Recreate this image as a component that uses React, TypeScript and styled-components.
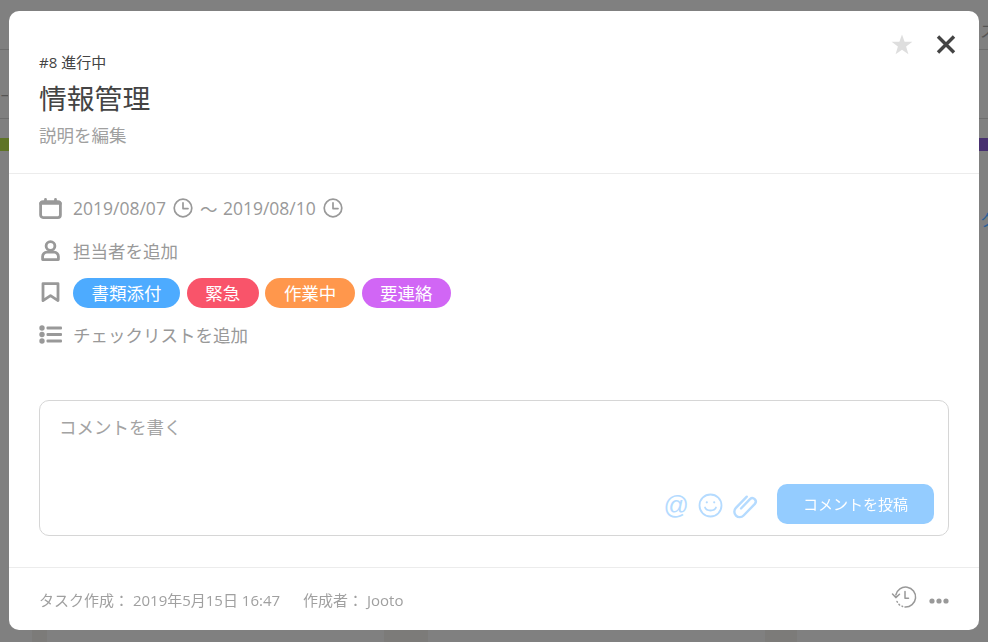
import styled, { createGlobalStyle } from 'styled-components';

const GlobalStyle = createGlobalStyle`
  html, body {
    margin: 0;
    padding: 0;
    height: 100%;
    overflow: hidden;
    background: #808080;
    font-family: "Open Sans", "Noto Sans CJK JP", sans-serif;
  }
  * {
    box-sizing: border-box;
  }
`;

/* the dimmed board behind the dialog */
const Board = styled.div`
  width: 988px;
  height: 642px;
  overflow: hidden;
  display: flex;
  flex-direction: column;
  background: #808080;
`;

const BoardTop = styled.div`
  height: 50px;
  display: flex;
  justify-content: flex-end;
  align-items: center;
  padding-top: 10px;
  border-bottom: 1px solid #6e6e6e;
  font-size: 16px;
  color: #555;
`;

const BoardSub = styled.div`
  height: 69px;
  display: flex;
  align-items: center;
  padding-top: 22px;
  font-size: 14px;
  color: #555;
  border-bottom: 1px solid #6e6e6e;
`;

const ClipText = styled.span`
  display: block;
  width: 8px;
  overflow: hidden;
  white-space: nowrap;
`;

const BandRow = styled.div`
  height: 13px;
  margin-top: 19px;
  display: flex;
  justify-content: space-between;
`;

const Band = styled.div<{ $color: string }>`
  width: 40px;
  background: ${p => p.$color};
`;

const BoardLink = styled.div`
  height: 22px;
  margin-top: 56px;
  display: flex;
  justify-content: flex-end;
  font-size: 16px;
  color: #2a6099;
`;

const Lanes = styled.div`
  flex: 1;
  display: flex;
  justify-content: space-between;
  margin-left: -340px;
`;

const Lane = styled.div<{ $width: number }>`
  width: ${p => p.$width}px;
  background: #7c7b79;
`;

const LaneGap = styled.div<{ $width: number }>`
  width: ${p => p.$width}px;
`;

const Modal = styled.div`
  position: fixed;
  left: 9px;
  top: 11px;
  width: 970px;
  height: 619px;
  display: flex;
  flex-direction: column;
  background: #fff;
  border-radius: 10px;
`;

const TopActions = styled.div`
  position: absolute;
  top: 23px;
  right: 23px;
  display: flex;
  align-items: center;
  gap: 23px;
`;

const Header = styled.header`
  height: 163px;
  padding: 41px 30px 0;
  border-bottom: 1px solid #ececec;
`;

const Meta = styled.div`
  font-size: 15px;
  line-height: 20px;
  color: #444;
`;

const Title = styled.h1`
  margin: 7px 0 0;
  font-size: 27.8px;
  line-height: 38px;
  font-weight: 400;
  color: #444;
`;

const Describe = styled.div`
  margin-top: 6px;
  font-size: 17.5px;
  line-height: 24px;
  color: #a0a0a0;
`;

const Body = styled.section`
  flex: 1;
  display: flex;
  flex-direction: column;
  padding: 19px 30px 0;
`;

const Row = styled.div`
  height: 30px;
  margin-bottom: 12.3px;
  display: flex;
  align-items: center;
  gap: 11px;
  font-size: 17.5px;
  color: #999;
`;

const RowIcon = styled.span`
  width: 23px;
  height: 24px;
  display: flex;
  align-items: center;
  justify-content: center;
  flex: none;
`;

const DateRange = styled.div`
  display: flex;
  align-items: center;
  gap: 7px;
`;

const Wave = styled.span`
  margin-right: -1.5px;
`;

const Tags = styled.div`
  display: flex;
  gap: 6.7px;
`;

const Tag = styled.span<{ $color: string }>`
  height: 30px;
  padding: 0 18.5px;
  display: flex;
  align-items: center;
  border-radius: 15px;
  background: ${p => p.$color};
  color: #fff;
  font-size: 17.5px;
`;

const Composer = styled.div`
  height: 136px;
  margin-top: 37.7px;
  padding: 13px 14px 11px 19px;
  display: flex;
  flex-direction: column;
  justify-content: space-between;
  border: 1px solid #d6d6d6;
  border-radius: 10px;
`;

const Placeholder = styled.div`
  font-size: 17.5px;
  line-height: 26px;
  color: #a3a3a3;
`;

const ComposerActions = styled.div`
  display: flex;
  align-items: center;
  justify-content: flex-end;
`;

const AtSign = styled.span`
  font-family: "Liberation Sans", sans-serif;
  font-size: 25px;
  line-height: 34px;
  color: #b5dbff;
  margin: 3px 9px 0 0;
`;

const ComposerIcons = styled.div`
  display: flex;
  align-items: center;
  gap: 10px;
  margin-right: 18px;
  padding-top: 4px;
`;

const PostButton = styled.button`
  width: 157px;
  height: 40px;
  padding: 0;
  border: none;
  border-radius: 10px;
  background: #94ccff;
  color: #fff;
  font-family: inherit;
  font-size: 15px;
`;

const Footer = styled.footer`
  height: 63px;
  padding: 0 30px;
  display: flex;
  align-items: center;
  justify-content: space-between;
  border-top: 1px solid #ececec;
  font-size: 15px;
  color: #a0a0a0;
`;

const FooterInfo = styled.div`
  display: flex;
  gap: 23px;
  padding-top: 1px;
`;

const FooterActions = styled.div`
  display: flex;
  align-items: flex-end;
  gap: 12px;
  margin-bottom: 5px;
`;

const DotsIcon = styled.svg`
  margin-bottom: 5px;
`;

const ClockIcon = () => (
  <svg width="20" height="20" viewBox="0 0 20 20" fill="none" stroke="#999" strokeWidth="1.7" strokeLinecap="round" strokeLinejoin="round">
    <circle cx="10" cy="10" r="8.8" />
    <path d="M10 4.8V10.6H15" />
  </svg>
);

const PATH_CLIP =
  'M8 15.5 17 6.2a3.4 3.4 0 0 1 4.9 4.7L10.6 22.5a5.4 5.4 0 0 1-7.7-7.6L13.8 3.7';

export default function App() {
  return (
    <>
      <GlobalStyle />
      <Board>
        <BoardTop>
          <ClipText>ス</ClipText>
        </BoardTop>
        <BoardSub>
          <ClipText>ー</ClipText>
        </BoardSub>
        <BandRow>
          <Band $color="#5f7426" />
          <Band $color="#47306f" />
        </BandRow>
        <BoardLink>
          <ClipText>ク</ClipText>
        </BoardLink>
        <Lanes>
          <LaneGap $width={372} />
          <Lane $width={15} />
          <LaneGap $width={337} />
          <Lane $width={44} />
          <LaneGap $width={337} />
          <Lane $width={32} />
          <LaneGap $width={191} />
        </Lanes>
      </Board>

      <Modal>
        <TopActions>
          <svg width="22" height="21" viewBox="0 0 22 21">
            <path d="M11 0.5 13.6 7.8H21.4L15.1 12.6 17.4 20.2 11 15.7 4.6 20.2 6.9 12.6 0.6 7.8H8.4Z" fill="#dedede" />
          </svg>
          <svg width="20" height="20" viewBox="0 0 20 20" stroke="#444" strokeWidth="3.4">
            <path d="M2 1.5 18 17.5M18 1.5 2 17.5" />
          </svg>
        </TopActions>

        <Header>
          <Meta>#8 進行中</Meta>
          <Title>情報管理</Title>
          <Describe>説明を編集</Describe>
        </Header>

        <Body>
          <Row>
            <RowIcon>
              <svg width="23" height="21" viewBox="0 0 23 21" fill="none" stroke="#999" strokeWidth="2.8" strokeLinecap="round" strokeLinejoin="round">
                <rect x="1.6" y="3.6" width="19.8" height="16" rx="2.5" />
                <path d="M6.5 1.4V4.5M16.5 1.4V4.5M1.6 5.4H21.4" />
              </svg>
            </RowIcon>
            <DateRange>
              <span>2019/08/07</span>
              <ClockIcon />
              <Wave>〜</Wave>
              <span>2019/08/10</span>
              <ClockIcon />
            </DateRange>
          </Row>
          <Row>
            <RowIcon>
              <svg width="19" height="21" viewBox="0 0 19 21" fill="none" stroke="#999" strokeWidth="2.8" strokeLinejoin="round">
                <circle cx="9.5" cy="6" r="4.4" />
                <path d="M1.6 19.6V16.4A4.2 4.2 0 0 1 5.8 12.2H13.2A4.2 4.2 0 0 1 17.4 16.4V19.6Z" />
              </svg>
            </RowIcon>
            担当者を追加
          </Row>
          <Row>
            <RowIcon>
              <svg width="19" height="21" viewBox="0 0 19 21" fill="none" stroke="#999" strokeWidth="2.8" strokeLinejoin="round">
                <path d="M2 1.6H17V18.6L9.5 13.6 2 18.6Z" />
              </svg>
            </RowIcon>
            <Tags>
              <Tag $color="#4dabff">書類添付</Tag>
              <Tag $color="#f9546a">緊急</Tag>
              <Tag $color="#ff974c">作業中</Tag>
              <Tag $color="#d166f5">要連絡</Tag>
            </Tags>
          </Row>
          <Row>
            <RowIcon>
              <svg width="23" height="19" viewBox="0 0 23 19" fill="#999">
                <circle cx="3" cy="3" r="2.7" />
                <circle cx="3" cy="9.5" r="2.7" />
                <circle cx="3" cy="16" r="2.7" />
                <rect x="7.5" y="1.6" width="15.5" height="2.8" rx="1" />
                <rect x="7.5" y="8.1" width="15.5" height="2.8" rx="1" />
                <rect x="7.5" y="14.6" width="15.5" height="2.8" rx="1" />
              </svg>
            </RowIcon>
            チェックリストを追加
          </Row>

          <Composer>
            <Placeholder>コメントを書く</Placeholder>
            <ComposerActions>
              <AtSign>@</AtSign>
              <ComposerIcons>
                <svg width="25" height="25" viewBox="0 0 25 25" fill="none" stroke="#b5dbff" strokeWidth="1.8" strokeLinecap="round">
                  <circle cx="12.5" cy="12.5" r="11" />
                  <path d="M7 14.5C8.5 18.5 16.5 18.5 18 14.5" />
                  <circle cx="8.8" cy="9.3" r="1.1" fill="#b5dbff" stroke="none" />
                  <circle cx="16.2" cy="9.3" r="1.1" fill="#b5dbff" stroke="none" />
                </svg>
                <svg width="26" height="26" viewBox="0 0 26 26" fill="none" stroke="#b5dbff" strokeWidth="2.4" strokeLinecap="round" strokeLinejoin="round">
                  <path d={PATH_CLIP} />
                </svg>
              </ComposerIcons>
              <PostButton>コメントを投稿</PostButton>
            </ComposerActions>
          </Composer>
        </Body>

        <Footer>
          <FooterInfo>
            <span>タスク作成： 2019年5月15日 16:47</span>
            <span>作成者： Jooto</span>
          </FooterInfo>
          <FooterActions>
            <svg width="26" height="24" viewBox="0 0 26 24" fill="none" stroke="#999" strokeWidth="1.5" strokeLinecap="round" strokeLinejoin="round">
              <path d="M4.8 10A10 10 0 1 1 14 22" />
              <path d="M1.5 9 4.8 12.6 8.5 9.2" />
              <path d="M14 6.5V13.2H17.5" />
              <path d="M6 16.5 6.4 17.2M8 19.4 8.6 20M11 21.2 11.6 21.5" />
            </svg>
            <DotsIcon width="20" height="6" viewBox="0 0 20 6" fill="#999">
              <circle cx="3" cy="3" r="2.6" />
              <circle cx="10" cy="3" r="2.6" />
              <circle cx="17" cy="3" r="2.6" />
            </DotsIcon>
          </FooterActions>
        </Footer>
      </Modal>
    </>
  );
}
